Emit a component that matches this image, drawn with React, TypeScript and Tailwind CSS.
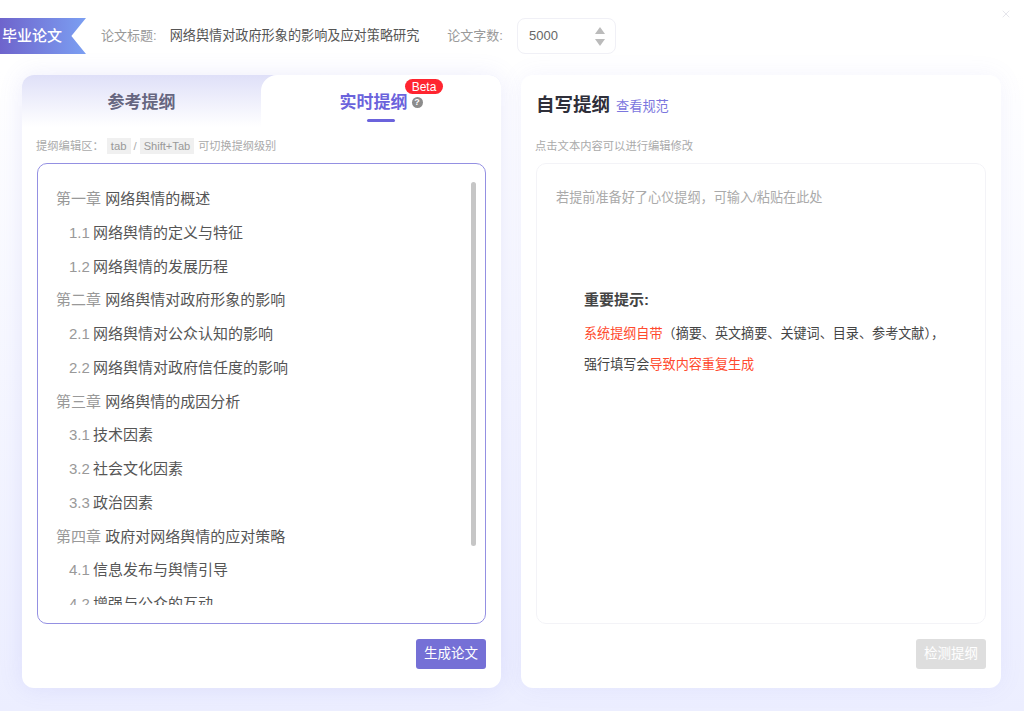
import { X } from "lucide-react";

const outline = [
  { no: "第一章", title: "网络舆情的概述", sub: false },
  { no: "1.1", title: "网络舆情的定义与特征", sub: true },
  { no: "1.2", title: "网络舆情的发展历程", sub: true },
  { no: "第二章", title: "网络舆情对政府形象的影响", sub: false },
  { no: "2.1", title: "网络舆情对公众认知的影响", sub: true },
  { no: "2.2", title: "网络舆情对政府信任度的影响", sub: true },
  { no: "第三章", title: "网络舆情的成因分析", sub: false },
  { no: "3.1", title: "技术因素", sub: true },
  { no: "3.2", title: "社会文化因素", sub: true },
  { no: "3.3", title: "政治因素", sub: true },
  { no: "第四章", title: "政府对网络舆情的应对策略", sub: false },
  { no: "4.1", title: "信息发布与舆情引导", sub: true },
  { no: "4.2", title: "增强与公众的互动", sub: true },
];

const App = () => {
  return (
    <div className="relative h-[711px] w-full overflow-hidden bg-gradient-to-b from-white from-10% to-[#eceeff] font-['Liberation_Sans','Noto_Sans_CJK_SC',sans-serif]">
      <X className="absolute right-[12px] top-[8px] h-[12px] w-[12px] text-[#e6e6ec]" />

      {/* header */}
      <div className="flex h-[75px] items-start pt-[18px]">
        <div className="flex h-[36px] w-[86px] items-center bg-gradient-to-r from-[#6e64cc] to-[#7b9ff2] pl-[2px] text-[15px] font-medium text-white [clip-path:polygon(0_0,100%_0,83%_50%,100%_100%,0_100%)]">
          毕业论文
        </div>
        <div className="flex h-[36px] items-center text-[13px]">
          <span className="ml-[15px] text-[#999]">论文标题:</span>
          <span className="ml-[13px] text-[13.15px] text-[#555]">网络舆情对政府形象的影响及应对策略研究</span>
          <span className="ml-[28px] text-[#999]">论文字数:</span>
          <div className="ml-[14px] flex h-[36px] w-[99px] items-center justify-between rounded-lg border border-[#f0f0f6] bg-white pl-[11px] pr-[10px] text-[#666]">
            5000
            <div className="flex flex-col gap-[5px]">
              <div className="h-0 w-0 border-x-[5px] border-b-[7px] border-x-transparent border-b-[#bbb]" />
              <div className="h-0 w-0 border-x-[5px] border-t-[7px] border-x-transparent border-t-[#bbb]" />
            </div>
          </div>
        </div>
      </div>

      <div className="flex gap-[20px] pl-[22px] pr-[23px]">
        {/* left card */}
        <div className="h-[613px] w-[479px] overflow-hidden rounded-xl bg-white shadow-[0_0_24px_rgba(110,110,230,0.12)]">
          <div className="flex h-[52px] bg-gradient-to-b from-[#dfe0f8] to-white">
            <div className="flex w-[239px] items-center justify-center pt-[3px] text-[17px] font-bold text-[#666680]">参考提纲</div>
            <div className="relative flex flex-1 items-center justify-center rounded-tl-2xl bg-white pt-[3px]">
              <span className="text-[17px] font-bold text-[#6b63dc]">实时提纲</span>
              <span className="ml-[4px] flex h-[11px] w-[11px] items-center justify-center rounded-full bg-[#8c8c8c] text-[9px] font-bold text-white">?</span>
              <span className="absolute left-[144px] top-[4px] flex h-[15px] w-[38px] items-center justify-center rounded-[8px] bg-[#ff2530] text-[12px] text-white">Beta</span>
              <span className="absolute left-[106px] top-[44px] h-[3px] w-[28px] rounded-full bg-[#6b63dc]" />
            </div>
          </div>

          <div className="flex h-[36px] items-center pl-[14px] pt-[2px] text-[11.3px] text-[#aaa]">
            提纲编辑区：
            <span className="ml-[3px] bg-[#f0f0f0] px-[4px] leading-[16px] text-[#999]">tab</span>
            <span className="mx-[3px]">/</span>
            <span className="bg-[#f0f0f0] px-[4px] text-[11.1px] leading-[16px] text-[#999]">Shift+Tab</span>
            <span className="ml-[4px] text-[11.15px]">可切换提纲级别</span>
          </div>

          <div className="relative mx-[15px] h-[461px] rounded-[10px] border border-[#9490e2] py-[18px] pl-[18px]">
            <div className="h-[423px] overflow-hidden">
              {outline.map((row) => (
                <div key={row.no} className={`h-[33.75px] text-[15px] leading-[33px] text-[#555] ${row.sub ? "pl-[13px]" : ""}`}>
                  <span className="text-[#999]">{row.no}</span> <span className={row.sub ? "-ml-px" : ""}>{row.title}</span>
                </div>
              ))}
            </div>
            <div className="absolute left-[433px] top-[18px] h-[364px] w-[5px] rounded-full bg-[#c6c6c6]" />
          </div>

          <div className="flex justify-end pr-[15px] pt-[15px]">
            <button className="h-[30px] w-[70px] rounded-[3px] bg-[#7570d6] text-[13.5px] text-white">生成论文</button>
          </div>
        </div>

        {/* right card */}
        <div className="h-[613px] flex-1 overflow-hidden rounded-xl bg-white shadow-[0_0_24px_rgba(110,110,230,0.08)]">
          <div className="flex h-[60px] items-center pl-[15px] pt-[1px]">
            <span className="text-[18.5px] font-bold leading-none text-[#2f2f3a]">自写提纲</span>
            <span className="ml-[6px] mt-[2px] text-[13.2px] leading-none text-[#7b76de]">查看规范</span>
          </div>

          <div className="flex h-[28px] items-center pb-[6px] pl-[14px] text-[11.3px] text-[#aaa]">点击文本内容可以进行编辑修改</div>

          <div className="mx-[15px] h-[461px] rounded-[10px] border border-[#f3f3f7] pl-[19px] pt-[24px]">
            <div className="text-[13.15px] leading-[20px] text-[#aaa]">若提前准备好了心仪提纲，可输入/粘贴在此处</div>
            <div className="ml-[28px] mt-[81px]">
              <div className="text-[15px] font-bold leading-[22px] text-[#444]">重要提示:</div>
              <div className="mt-[7px] text-[13.1px] leading-[31px] text-[#444]">
                <span className="text-[#ff4a2e]">系统提纲自带</span>（摘要、英文摘要、关键词、目录、参考文献），
                <br />
                强行填写会<span className="text-[#ff4a2e]">导致内容重复生成</span>
              </div>
            </div>
          </div>

          <div className="flex justify-end pr-[15px] pt-[15px]">
            <button className="h-[30px] w-[70px] rounded-[3px] bg-[#dedede] text-[13.5px] text-white">检测提纲</button>
          </div>
        </div>
      </div>
    </div>
  );
};

export default App;
